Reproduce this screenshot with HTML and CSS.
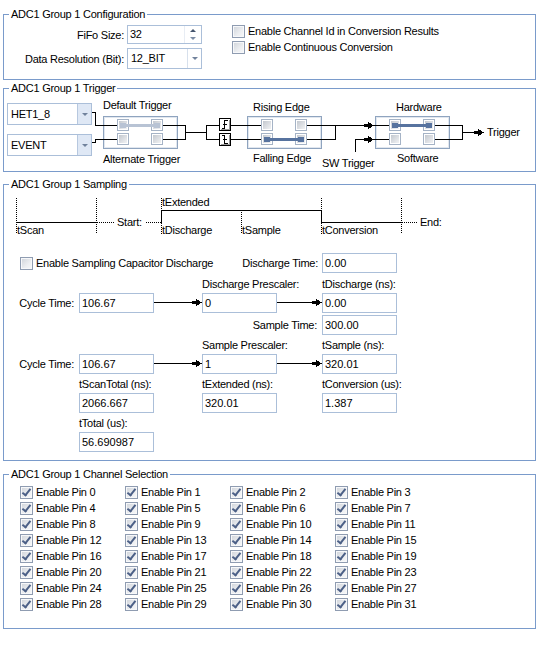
FILE: index.html
```html
<!DOCTYPE html>
<html>
<head>
<meta charset="utf-8">
<title>ADC1 Group 1</title>
<link rel="stylesheet" href="styles.css">
</head>
<body>
<div class="page">

<fieldset class="grp g1">
  <legend>ADC1 Group 1 Configuration</legend>
  <div class="cfg">
    <div class="cfg-form">
      <span class="flbl">FiFo Size:</span>
      <div class="spin">
        <span class="val">32</span>
        <span class="spin-btns"><span class="sb"><i class="tri up"></i></span><span class="sb"><i class="tri dn light"></i></span></span>
      </div>
      <span class="flbl">Data Resolution (Bit):</span>
      <div class="combo"><span class="val">12_BIT</span><span class="drop"><i class="tri dn"></i></span></div>
    </div>
    <div class="cfg-checks">
      <label class="chk"><span class="cb"></span>Enable Channel Id in Conversion Results</label>
      <label class="chk"><span class="cb"></span>Enable Continuous Conversion</label>
    </div>
  </div>
</fieldset>

<fieldset class="grp g2">
  <legend>ADC1 Group 1 Trigger</legend>
  <div class="trig">
    <div class="combos">
      <div class="combo tall blue"><span class="val">HET1_8</span><span class="drop"><i class="tri dn"></i></span></div>
      <div class="combo tall blue"><span class="val">EVENT</span><span class="drop"><i class="tri dn"></i></span></div>
    </div>
    <svg class="trig-svg" width="440" height="76" viewBox="0 0 440 76" shape-rendering="crispEdges">
      <defs>
        <linearGradient id="sqg" x1="0" y1="0" x2="1" y2="1">
          <stop offset="0" stop-color="#c3c8cf"/>
          <stop offset="1" stop-color="#f1f2f4"/>
        </linearGradient>
        <symbol id="sq" viewBox="0 0 12 12" width="12" height="12">
          <rect x="0.5" y="0.5" width="11" height="11" fill="#ffffff" stroke="#a5b3c6"/>
          <rect x="2" y="2" width="8" height="8" fill="url(#sqg)"/>
        </symbol>
      </defs>
      <!-- switch boxes -->
      <rect x="11.5" y="21.5" width="74" height="32" class="sbox"/>
      <rect x="12.5" y="22.5" width="72" height="30" class="sbox-in"/>
      <rect x="155.5" y="21.5" width="74" height="32" class="sbox"/>
      <rect x="156.5" y="22.5" width="72" height="30" class="sbox-in"/>
      <rect x="283.5" y="21.5" width="74" height="32" class="sbox"/>
      <rect x="284.5" y="22.5" width="72" height="30" class="sbox-in"/>
      <!-- wires -->
      <path class="wire" d="M0 17.5H3.5V30.5H25 M0 47.5H3.5V44.5H25 M71 30.5H93.5V44.5H71 M93.5 37.5H114.5 M127 30.5H114.5V44.5H127 M139 30.5H169 M139 44.5H169 M215 30.5H274 M215 44.5H243.5V30.5 M263.5 57V44.5H274 M281 30.5H297 M281 44.5H297 M343 30.5H370.5V44.5H343 M370.5 37.5H384"/>
      <!-- arrow heads -->
      <polygon class="ah" points="272,29 276,29 276,27 282,30.5 276,34 276,32 272,32"/>
      <polygon class="ah" points="272,43 276,43 276,41 282,44.5 276,48 276,46 272,46"/>
      <polygon class="ah" points="382,36 386,36 386,34 392,37.5 386,41 386,39 382,39"/>
      <!-- default trigger squares -->
      <use href="#sq" x="25" y="24"/>
      <use href="#sq" x="59" y="24"/>
      <use href="#sq" x="25" y="38"/>
      <use href="#sq" x="59" y="38"/>
      <rect x="31" y="29" width="34" height="3" class="bar-light"/>
      <rect x="28" y="28" width="6" height="5" class="bar-light"/>
      <rect x="62" y="28" width="6" height="5" class="bar-light"/>
      <!-- edge icons -->
      <g transform="translate(127,23)">
        <rect x="0.5" y="0.5" width="11" height="12" class="ico"/>
        <path class="ico-sh" d="M10.5 1.5V12 M1.5 11.5H11"/>
        <path class="ico-g" d="M3 10.5H5.5V2.5H9 M4 6.5H7.5"/>
      </g>
      <g transform="translate(127,38)">
        <rect x="0.5" y="0.5" width="11" height="12" class="ico"/>
        <path class="ico-sh" d="M10.5 1.5V12 M1.5 11.5H11"/>
        <path class="ico-g" d="M3 2.5H5.5V10.5H9 M4 6.5H7.5"/>
      </g>
      <!-- rising/falling squares -->
      <use href="#sq" x="169" y="24"/>
      <use href="#sq" x="203" y="24"/>
      <use href="#sq" x="169" y="38"/>
      <use href="#sq" x="203" y="38"/>
      <rect x="175" y="43" width="34" height="3" class="bar-dark"/>
      <rect x="172" y="42" width="6" height="5" class="bar-dark"/>
      <rect x="206" y="42" width="6" height="5" class="bar-dark"/>
      <!-- hardware/software squares -->
      <use href="#sq" x="297" y="24"/>
      <use href="#sq" x="331" y="24"/>
      <use href="#sq" x="297" y="38"/>
      <use href="#sq" x="331" y="38"/>
      <rect x="303" y="29" width="34" height="3" class="bar-dark"/>
      <rect x="300" y="28" width="6" height="5" class="bar-dark"/>
      <rect x="334" y="28" width="6" height="5" class="bar-dark"/>
      <!-- labels -->
      <text x="11" y="14">Default Trigger</text>
      <text x="11" y="68">Alternate Trigger</text>
      <text x="161" y="16">Rising Edge</text>
      <text x="161" y="67">Falling Edge</text>
      <text x="304" y="16">Hardware</text>
      <text x="305" y="67">Software</text>
      <text x="230" y="72">SW Trigger</text>
      <text x="395" y="41">Trigger</text>
    </svg>
  </div>
</fieldset>

<fieldset class="grp g3">
  <legend>ADC1 Group 1 Sampling</legend>
  <svg class="tdiag" width="529" height="49" viewBox="0 0 529 49" shape-rendering="crispEdges">
    <path class="dot" d="M12.5 7V43 M92.5 7V43 M157.5 7V19 M157.5 32V43 M237.5 19V43 M317.5 7V19 M317.5 32V43 M397.5 7V43 M93 31.5H110 M142 31.5H157 M398 31.5H414"/>
    <path class="wire" d="M12 31.5H93 M157.5 19V32 M157 19.5H318 M317.5 19V32 M317 31.5H398"/>
    <text x="113" y="35">Start:</text>
    <text x="416" y="35">End:</text>
    <text x="158" y="15">tExtended</text>
    <text x="13" y="43">tScan</text>
    <text x="158" y="43">tDischarge</text>
    <text x="238" y="43">tSample</text>
    <text x="318" y="43">tConversion</text>
  </svg>
  <div class="sgrid">
    <label class="chk ad r1 pl"><span class="cb"></span>Enable Sampling Capacitor Discharge</label>
    <span class="rl de r1 pr4">Discharge Time:</span>
    <span class="tb f r1">0.00</span>

    <span class="tl d r2">Discharge Prescaler:</span>
    <span class="tl f r2">tDischarge (ns):</span>

    <span class="rl a r3 pr5">Cycle Time:</span>
    <span class="tb b r3">106.67</span>
    <svg class="arr c r3" width="48" height="20" viewBox="0 0 48 20" shape-rendering="crispEdges"><path class="wire" d="M0 9.5H40"/><polygon class="ah" points="38,8 42,8 42,6 48,9.5 42,13 42,11 38,11"/></svg>
    <span class="tb d r3">0</span>
    <svg class="arr e r3" width="45" height="20" viewBox="0 0 45 20" shape-rendering="crispEdges"><path class="wire" d="M0 9.5H37"/><polygon class="ah" points="35,8 39,8 39,6 45,9.5 39,13 39,11 35,11"/></svg>
    <span class="tb f r3">0.00</span>

    <span class="rl de r4 pr5">Sample Time:</span>
    <span class="tb f r4">300.00</span>

    <span class="tl d r5">Sample Prescaler:</span>
    <span class="tl f r5">tSample (ns):</span>

    <span class="rl a r6 pr5">Cycle Time:</span>
    <span class="tb b r6">106.67</span>
    <svg class="arr c r6" width="48" height="20" viewBox="0 0 48 20" shape-rendering="crispEdges"><path class="wire" d="M0 9.5H40"/><polygon class="ah" points="38,8 42,8 42,6 48,9.5 42,13 42,11 38,11"/></svg>
    <span class="tb d r6">1</span>
    <svg class="arr e r6" width="45" height="20" viewBox="0 0 45 20" shape-rendering="crispEdges"><path class="wire" d="M0 9.5H37"/><polygon class="ah" points="35,8 39,8 39,6 45,9.5 39,13 39,11 35,11"/></svg>
    <span class="tb f r6">320.01</span>

    <span class="tl b r7">tScanTotal (ns):</span>
    <span class="tl d r7">tExtended (ns):</span>
    <span class="tl f r7">tConversion (us):</span>

    <span class="tb b r8">2066.667</span>
    <span class="tb d r8">320.01</span>
    <span class="tb f r8">1.387</span>

    <span class="tl b r9">tTotal (us):</span>
    <span class="tb b r10">56.690987</span>
  </div>
</fieldset>

<fieldset class="grp g4">
  <legend>ADC1 Group 1 Channel Selection</legend>
  <div class="pins">
    <label class="chk"><span class="cb on"></span>Enable Pin 0</label>
    <label class="chk"><span class="cb on"></span>Enable Pin 1</label>
    <label class="chk"><span class="cb on"></span>Enable Pin 2</label>
    <label class="chk"><span class="cb on"></span>Enable Pin 3</label>
    <label class="chk"><span class="cb on"></span>Enable Pin 4</label>
    <label class="chk"><span class="cb on"></span>Enable Pin 5</label>
    <label class="chk"><span class="cb on"></span>Enable Pin 6</label>
    <label class="chk"><span class="cb on"></span>Enable Pin 7</label>
    <label class="chk"><span class="cb on"></span>Enable Pin 8</label>
    <label class="chk"><span class="cb on"></span>Enable Pin 9</label>
    <label class="chk"><span class="cb on"></span>Enable Pin 10</label>
    <label class="chk"><span class="cb on"></span>Enable Pin 11</label>
    <label class="chk"><span class="cb on"></span>Enable Pin 12</label>
    <label class="chk"><span class="cb on"></span>Enable Pin 13</label>
    <label class="chk"><span class="cb on"></span>Enable Pin 14</label>
    <label class="chk"><span class="cb on"></span>Enable Pin 15</label>
    <label class="chk"><span class="cb on"></span>Enable Pin 16</label>
    <label class="chk"><span class="cb on"></span>Enable Pin 17</label>
    <label class="chk"><span class="cb on"></span>Enable Pin 18</label>
    <label class="chk"><span class="cb on"></span>Enable Pin 19</label>
    <label class="chk"><span class="cb on"></span>Enable Pin 20</label>
    <label class="chk"><span class="cb on"></span>Enable Pin 21</label>
    <label class="chk"><span class="cb on"></span>Enable Pin 22</label>
    <label class="chk"><span class="cb on"></span>Enable Pin 23</label>
    <label class="chk"><span class="cb on"></span>Enable Pin 24</label>
    <label class="chk"><span class="cb on"></span>Enable Pin 25</label>
    <label class="chk"><span class="cb on"></span>Enable Pin 26</label>
    <label class="chk"><span class="cb on"></span>Enable Pin 27</label>
    <label class="chk"><span class="cb on"></span>Enable Pin 28</label>
    <label class="chk"><span class="cb on"></span>Enable Pin 29</label>
    <label class="chk"><span class="cb on"></span>Enable Pin 30</label>
    <label class="chk"><span class="cb on"></span>Enable Pin 31</label>
  </div>
</fieldset>

</div>
</body>
</html>
```

FILE: styles.css
```css
* { box-sizing: border-box; }

body {
  margin: 0;
  background: #ffffff;
  color: #000000;
  font-family: "Liberation Sans", Arial, sans-serif;
  font-size: 11px;
  line-height: 14px;
  letter-spacing: -0.25px;
}

.page {
  padding: 7px 0 0 3px;
  width: 545px;
}

/* group boxes */
.grp {
  margin: 0;
  padding: 0;
  min-width: 0;
  width: 533px;
  border: 1px solid #7a9bcb;
}
.grp legend {
  margin-left: 5px;
  padding: 0 2px;
  line-height: 14px;
}
.g2 { margin-top: 1px; }
.g3 { margin-top: 5px; }
.g4 { margin-top: 6px; }

/* checkbox */
.chk {
  display: flex;
  align-items: center;
  gap: 3px;
  height: 16px;
  white-space: nowrap;
}
.cb {
  position: relative;
  flex: none;
  width: 13px;
  height: 13px;
  border: 1px solid #8f9cb1;
  background: linear-gradient(135deg, #cfd3d9 0%, #eceef1 60%, #f8f8f9 100%);
  box-shadow: inset 0 0 0 1px #f7f8fa;
}
.cb.on::after {
  content: "";
  position: absolute;
  left: 3px;
  top: 0px;
  width: 3px;
  height: 7px;
  border: solid #4c6087;
  border-width: 0 2px 2px 0;
  transform: rotate(38deg);
}

/* configuration */
.cfg {
  display: flex;
  align-items: flex-start;
  padding: 4px 0 10px 0;
}
.cfg-form {
  display: grid;
  grid-template-columns: 120px 75px;
  grid-template-rows: 19px 21px;
  column-gap: 3px;
  row-gap: 4px;
  align-items: center;
}
.flbl {
  justify-self: end;
  white-space: nowrap;
}
.cfg-checks {
  display: flex;
  flex-direction: column;
  margin: -2px 0 0 30px;
}

/* spinner / combo */
.spin, .combo {
  display: flex;
  border: 1px solid #abbfd9;
  background: #ffffff;
}
.spin { height: 19px; }
.spin .val {
  flex: 1;
  padding-left: 2px;
  line-height: 17px;
}
.spin-btns {
  width: 17px;
  display: flex;
  flex-direction: column;
  border-left: 1px solid #e8edf4;
}
.sb {
  flex: 1;
  display: flex;
  align-items: center;
  justify-content: center;
}
.combo { height: 21px; }
.combo .val {
  flex: 1;
  padding-left: 3px;
  line-height: 19px;
  white-space: nowrap;
}
.combo .drop {
  width: 14px;
  display: flex;
  align-items: center;
  justify-content: center;
  border-left: 1px solid #d7e0ec;
}
.combo.tall { height: 22px; }
.combo.tall .val { line-height: 20px; }
.combo.blue .drop {
  background: #dfe8f5;
  border-left-color: #b7c8df;
}
.tri {
  display: block;
  width: 0;
  height: 0;
  border-left: 3px solid transparent;
  border-right: 3px solid transparent;
}
.tri.dn { border-top: 3px solid #71829c; }
.tri.up { border-bottom: 3px solid #44546d; }
.tri.dn.light { border-top-color: #7d8da5; }

/* trigger */
.trig { display: flex; }
.combos {
  display: flex;
  flex-direction: column;
  gap: 9px;
  width: 88px;
  padding: 8px 0 0 3px;
}
.trig-svg { display: block; }

.sbox { fill: #ffffff; stroke: #8fa4bf; }
.sbox-in { fill: none; stroke: #e1e7ef; }
.wire { fill: none; stroke: #000000; stroke-width: 1; }
.dot { fill: none; stroke: #000000; stroke-width: 1; stroke-dasharray: 1 1; }
.ah { fill: #000000; }
.bar-light { fill: #b8c3d4; }
.bar-dark { fill: #57739f; }
.ico { fill: #ffffff; stroke: #000000; }
.ico-sh { fill: none; stroke: #9a9a9a; }
.ico-g { fill: none; stroke: #000000; }

/* sampling */
.tdiag { display: block; }
.sgrid {
  display: grid;
  margin-top: 13px;
  padding-bottom: 8px;
  grid-template-columns: 75px 75px 48px 75px 45px 75px;
  grid-template-rows: 20px 20px 20px 22px 19px 20px 19px 20px 19px 20px;
}
.a { grid-column: 1; }
.b { grid-column: 2; }
.c { grid-column: 3; }
.d { grid-column: 4; }
.e { grid-column: 5; }
.f { grid-column: 6; }
.ad { grid-column: 1 / 4; }
.de { grid-column: 4 / 6; }
.r1 { grid-row: 1; }
.r2 { grid-row: 2; }
.r3 { grid-row: 3; }
.r4 { grid-row: 4; }
.r5 { grid-row: 5; }
.r6 { grid-row: 6; }
.r7 { grid-row: 7; }
.r8 { grid-row: 8; }
.r9 { grid-row: 9; }
.r10 { grid-row: 10; }
.pl { padding-left: 16px; align-self: center; }
.pr4 { padding-right: 4px; }
.pr5 { padding-right: 5px; }

.tb {
  align-self: end;
  height: 20px;
  border: 1px solid #abbfd9;
  padding-left: 2px;
  line-height: 18px;
  white-space: nowrap;
  letter-spacing: 0;
}
.rl {
  justify-self: end;
  align-self: end;
  line-height: 20px;
  white-space: nowrap;
}
.tl {
  align-self: end;
  padding-bottom: 2px;
  white-space: nowrap;
}
.arr { display: block; align-self: end; }

/* channel selection */
.pins {
  display: grid;
  grid-template-columns: repeat(4, 105px);
  grid-auto-rows: 16px;
  padding: 3px 0 16px 16px;
}
```
